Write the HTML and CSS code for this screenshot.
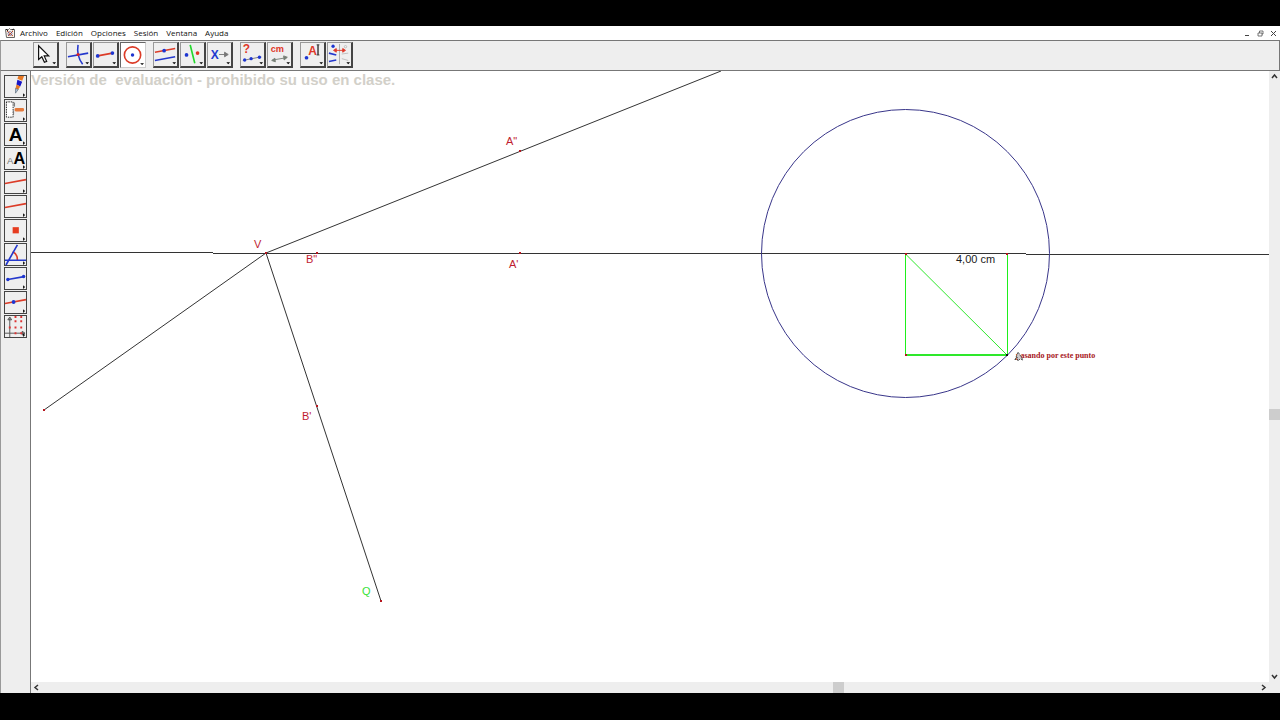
FILE: index.html
```html
<!DOCTYPE html>
<html lang="es">
<head>
<meta charset="utf-8">
<title>Geometría</title>
<link rel="stylesheet" href="styles.css">
</head>
<body>
<div class="app">
  <header class="menubar">
    <svg class="app-icon" width="10" height="10" viewBox="0 0 10 10"><path d="M.5 1.500h3l1-1 1 1h4v8h-8z" fill="#fff4e8" stroke="#666"/><path d="M2 3l6 5M8 3L3 8" stroke="#c3502c"/><circle cx="5" cy="5.500" r="2" fill="none" stroke="#3c4590" stroke-width=".6"/><path d="M1 1l2 2M7 2l2-1" stroke="#222"/></svg>
    <nav class="menus">
      <button class="menu">Archivo</button>
      <button class="menu">Edición</button>
      <button class="menu">Opciones</button>
      <button class="menu">Sesión</button>
      <button class="menu">Ventana</button>
      <button class="menu">Ayuda</button>
    </nav>
    <div class="window-buttons">
      <button class="win" aria-label="Minimizar"><svg width="9" height="9" viewBox="0 0 9 9"><path d="M2 6.500h4" stroke="#444"/></svg></button>
      <button class="win" aria-label="Restaurar"><svg width="9" height="9" viewBox="0 0 9 9"><path d="M2 4h4v3H2zM3.500 4V2H7v3H6" fill="none" stroke="#555" stroke-width=".8"/></svg></button>
      <button class="win" aria-label="Cerrar"><svg width="9" height="9" viewBox="0 0 9 9"><path d="M2 2l5 5M7 2L2 7" stroke="#444"/></svg></button>
    </div>
  </header>

  <div class="toolbar">
    <div class="group">
      <button class="tool" aria-label="Puntero"><svg viewBox="0 0 25 25"><path d="M5 3v15l3.500-3 2.800 6 2.500-1-2.700-6H16z" fill="#fff" stroke="#111" stroke-width="1.300"/><path class="more" d="M20 21h4l-2 2z"/></svg></button>
    </div>
    <div class="group">
      <button class="tool" aria-label="Puntos"><svg viewBox="0 0 25 25"><path d="M1 15l22-4M12 2Q10 14 17 23" class="blue"/><circle cx="12" cy="12.500" r="1.700" fill="#d22"/><path class="more" d="M20 21h4l-2 2z"/></svg></button>
      <button class="tool" aria-label="Rectas"><svg viewBox="0 0 25 25"><path d="M4 14l16-3" class="red"/><circle cx="4" cy="14" r="2" class="dot"/><circle cx="20" cy="11" r="2" class="dot"/><path class="more" d="M20 21h4l-2 2z"/></svg></button>
      <button class="tool active" aria-label="Curvas"><svg viewBox="0 0 25 25"><circle cx="12" cy="12.500" r="8.500" class="red"/><circle cx="12" cy="12.500" r="1.800" class="dot"/><path class="more" d="M20 21h4l-2 2z"/></svg></button>
    </div>
    <div class="group">
      <button class="tool" aria-label="Construir"><svg viewBox="0 0 25 25"><path d="M1 10l22-4" class="red"/><path d="M1 19l22-4" class="blue"/><circle cx="11" cy="8.300" r="2" class="dot"/><path class="more" d="M20 21h4l-2 2z"/></svg></button>
      <button class="tool" aria-label="Transformar"><svg viewBox="0 0 25 25"><path d="M10 2l5 20" stroke="#22d82b" stroke-width="1.800"/><circle cx="6" cy="13" r="2" class="dot"/><circle cx="18" cy="11" r="2" fill="#e03420"/><path class="more" d="M20 21h4l-2 2z"/></svg></button>
      <button class="tool" aria-label="Macros"><svg viewBox="0 0 25 25"><text x="3" y="17" class="glyph" fill="#223bd0">X</text><path d="M12 12.500h6M18 10l4 2.500-4 2.500z" fill="#777" stroke="#777"/><path class="more" d="M20 21h4l-2 2z"/></svg></button>
    </div>
    <div class="group">
      <button class="tool" aria-label="Propiedades"><svg viewBox="0 0 25 25"><text x="2" y="11" class="glyph" fill="#df3828">?</text><path d="M2 19l20-4" stroke="#777"/><circle cx="4" cy="18.500" r="1.800" class="dot"/><circle cx="11" cy="17" r="1.800" class="dot"/><circle cx="20" cy="15.500" r="1.800" class="dot"/><path class="more" d="M20 21h4l-2 2z"/></svg></button>
      <button class="tool" aria-label="Medir"><svg viewBox="0 0 25 25"><text x="3" y="10" class="glyph small" fill="#df3828">cm</text><path d="M5 18.500l15-2.500M7.500 16.500L4 19l4 1.500zM17 14l4 1.500-3.500 3z" fill="#778077" stroke="#778077"/><path class="more" d="M20 21h4l-2 2z"/></svg></button>
    </div>
    <div class="group">
      <button class="tool" aria-label="Ver"><svg viewBox="0 0 25 25"><text x="8" y="13" class="glyph" fill="#df3828">A</text><path d="M17 2h1.500v11H17M20 2h-1.500v11H20" fill="none" stroke="#333"/><circle cx="6" cy="16" r="2" class="dot"/><path class="more" d="M20 21h4l-2 2z"/></svg></button>
      <button class="tool" aria-label="Atributos"><svg viewBox="0 0 25 25"><path d="M12.500 1v22" stroke="#aaa"/><path d="M1 11l8 2M1 20l8-1.500" class="blue"/><path d="M15 12l7-1M15 17l7 2" stroke="#bbb"/><circle cx="5.500" cy="3.500" r="1.800" class="dot"/><circle cx="19" cy="4" r="1.300" fill="none" stroke="#bbb"/><path d="M8 8h9M9 6L6 8l3 2zM16 6l3 2-3 2z" fill="#df3828" stroke="#df3828"/><path class="more" d="M20 21h4l-2 2z"/></svg></button>
    </div>
  </div>

  <main class="workspace">
    <aside class="attributes">
      <button class="attr" aria-label="Color"><svg viewBox="0 0 22 22"><path d="M14 0h6l-2 5-5-2z" fill="#e87924"/><path d="M13 4l5 2-2 5-4-2z" fill="#1815c8"/><path d="M12 9l4 2-2 3-3-1z" fill="#e87924"/><path d="M11 13l3 1-3 4z" fill="#aabbd0" stroke="#345" stroke-width=".5"/><path class="more" d="M19 18v4l2-2z"/></svg></button>
      <button class="attr" aria-label="Rellenar"><svg viewBox="0 0 22 22"><path d="M1.500 2v16h7V2z" fill="#fff" stroke="#222" stroke-dasharray="1.500 1"/><path d="M8 3h2v4M9 11v4" stroke="#777" fill="none"/><rect x="10" y="8.500" width="10" height="3.500" rx="1.500" fill="#e57a3c"/><path class="more" d="M19 18v4l2-2z"/></svg></button>
      <button class="attr" aria-label="Color del texto"><svg viewBox="0 0 22 22"><text x="4" y="18" class="glyph big">A</text><path class="more" d="M19 18v4l2-2z"/></svg></button>
      <button class="attr" aria-label="Tamaño del texto"><svg viewBox="0 0 22 22"><text x="2" y="17" class="glyph thin" fill="#777">A</text><text x="9" y="17" class="glyph medium">A</text><path class="more" d="M19 18v4l2-2z"/></svg></button>
      <button class="attr" aria-label="Espesor"><svg viewBox="0 0 22 22"><path d="M0 12l22-4" class="red"/><path class="more" d="M19 18v4l2-2z"/></svg></button>
      <button class="attr" aria-label="Punteado"><svg viewBox="0 0 22 22"><path d="M0 12l22-4" class="red"/><path class="more" d="M19 18v4l2-2z"/></svg></button>
      <button class="attr" aria-label="Aspecto del punto"><svg viewBox="0 0 22 22"><path d="M8 7.500h6.500V14H8z" fill="#e63c20"/><path class="more" d="M19 18v4l2-2z"/></svg></button>
      <button class="attr" aria-label="Marca de ángulo"><svg viewBox="0 0 22 22"><path d="M8 8q5 2 5 9" class="red"/><path d="M1 22L13 1M0 17h22" class="blue"/><path class="more" d="M19 18v4l2-2z"/></svg></button>
      <button class="attr" aria-label="Marca de segmento"><svg viewBox="0 0 22 22"><path d="M3 12l17-3" class="blue"/><circle cx="3" cy="12" r="1.800" class="dot"/><circle cx="19.500" cy="9" r="1.800" class="dot"/><path class="more" d="M19 18v4l2-2z"/></svg></button>
      <button class="attr" aria-label="Punto sobre recta"><svg viewBox="0 0 22 22"><path d="M0 12l22-4" class="red"/><circle cx="9" cy="10.500" r="2" class="dot"/><path class="more" d="M19 18v4l2-2z"/></svg></button>
      <button class="attr" aria-label="Ejes"><svg viewBox="0 0 22 22"><path d="M5 22V3M0 18h19M3 4l2-3 2 3zM18 16l3 2-3 2z" fill="#999" stroke="#555"/><path d="M10 5.500h2M16 5.500h2M10 12h2M16 12h2M4 12h2M10 18h2M16 18h2M10 1h2M16 1h2" stroke="#d33" stroke-width="2"/><path class="more" d="M19 18v4l2-2z"/></svg></button>
    </aside>

    <section class="sheet">
      <div class="drawing">
        <h1 class="notice">Versión de &nbsp;evaluación - prohibido su uso en clase.</h1>
        <svg class="figure" aria-label="Construcción geométrica">
          <g transform="translate(-31 -71)">
            <g class="ink">
              <path d="M31 252.500H213M213 253.500H1026M1026 254.500H1300" class="crisp"/>
              <path d="M266 253L721 71M266 253L44 410M266 253L381 601"/>
            </g>
            <circle cx="905.500" cy="253.500" r="144" class="circle"/>
            <path d="M905.500 254L1007 355" class="square"/>
            <path d="M905.500 254V355M1007.500 254V355" class="square crisp side"/>
            <path d="M905 355H1007" class="square base"/>
            <g class="points">
              <rect x="265" y="252" width="2" height="2"/><rect x="316" y="252" width="2" height="2"/>
              <rect x="519" y="252" width="2" height="2"/><rect x="519" y="150" width="2" height="2"/>
              <rect x="43" y="409" width="2" height="2"/><rect x="316" y="405" width="2" height="2"/>
              <rect x="380" y="600" width="2" height="2"/><rect x="905" y="253" width="2" height="2"/>
              <rect x="1006" y="253" width="2" height="2"/><rect x="905" y="354" width="2" height="2"/>
            </g>
            <rect x="1006" y="354" width="2" height="2" fill="#111"/>
            <g class="labels">
              <text x="254" y="248">V</text>
              <text x="306" y="263">B"</text>
              <text x="509" y="268">A'</text>
              <text x="506" y="145">A"</text>
              <text x="302" y="420">B'</text>
              <text x="362" y="595" class="q">Q</text>
            </g>
            <text x="956" y="263" class="measure">4,00 cm</text>
            <text x="1016" y="358" class="hint">pasando por este punto</text>
            <path d="M1015 360l3-8 2 3 3 5-3-1-2 2-1-4z" fill="#ccc" stroke="#333" stroke-width=".8" stroke-dasharray="2 1"/>
          </g>
        </svg>
      </div>
      <div class="scroll vertical">
        <button class="arrow" aria-label="Subir"><svg width="11" height="11" viewBox="0 0 11 11"><path d="M3 7l2.500-3L8 7"/></svg></button>
        <div class="track"><span class="before"></span><span class="thumb"></span><span class="after"></span></div>
        <button class="arrow" aria-label="Bajar"><svg width="11" height="11" viewBox="0 0 11 11"><path d="M3 4l2.500 3L8 4"/></svg></button>
      </div>
      <div class="scroll horizontal">
        <button class="arrow" aria-label="Izquierda"><svg width="11" height="11" viewBox="0 0 11 11"><path d="M7 3L4 5.500 7 8"/></svg></button>
        <div class="track"><span class="before"></span><span class="thumb"></span><span class="after"></span></div>
        <button class="arrow" aria-label="Derecha"><svg width="11" height="11" viewBox="0 0 11 11"><path d="M4 3l3 2.500L4 8"/></svg></button>
      </div>
      <div class="corner"></div>
    </section>
  </main>
</div>
</body>
</html>
```
FILE: styles.css
```css
* { box-sizing: border-box; }

body {
  margin: 0;
  background: #000;
  font-family: "Open Sans", "Noto Sans", sans-serif;
}

button {
  margin: 0;
  padding: 0;
  border: 0;
  background: none;
  font: inherit;
  color: inherit;
}

svg { display: block; }

.app {
  display: flex;
  flex-direction: column;
  height: 100vh;
  padding: 26px 0 27px;
}

.menubar {
  display: flex;
  align-items: center;
  height: 14px;
  padding-left: 5px;
  background: #fff;
  font-size: 8px;
  line-height: 14px;
  color: #111;
}

.menus {
  display: flex;
  gap: 8px;
  margin-left: 5px;
}

.window-buttons {
  display: flex;
  gap: 4px;
  margin-left: auto;
  padding-right: 2px;
}

.toolbar {
  display: flex;
  gap: 7px;
  height: 31px;
  padding: 1px 0 0 32px;
  background: #eee;
  border: 1px solid #777;
  border-left-color: #999;
}

.group {
  display: flex;
  gap: 1px;
}

.tool {
  width: 26px;
  height: 26px;
  background: #efefef;
  border: 1px solid #999;
  border-right: 2px solid #444;
  border-bottom: 2px solid #444;
}

.tool.active {
  background: #fff;
  border: 1px solid #666;
  border-right-color: #ccc;
  border-bottom-color: #ccc;
}

.tool svg,
.attr svg {
  width: 100%;
  height: 100%;
}

.blue { fill: none; stroke: #2438cc; stroke-width: 1.7; }
.red { fill: none; stroke: #dc3c28; stroke-width: 1.7; }
.dot { fill: #1d35d0; }
.more { fill: #000; }

.glyph {
  font: bold 13px "Liberation Sans", Arial, sans-serif;
}

.glyph.small { font-size: 10px; }
.glyph.medium { font-size: 17px; }
.glyph.big { font-size: 20px; }
.glyph.thin { font-size: 10px; font-weight: normal; }

.workspace {
  display: flex;
  flex: 1;
  min-height: 0;
}

.attributes {
  display: flex;
  flex-direction: column;
  gap: 1px;
  width: 31px;
  padding: 4px 0 0 3px;
  background: #eee;
  border: 1px solid #777;
  border-width: 0 1px;
  border-left-color: #999;
}

.attr {
  width: 23px;
  height: 23px;
  background: #efefef;
  border: 1px solid #444;
}

.attr svg { overflow: visible; }

.sheet {
  display: grid;
  flex: 1;
  grid-template-columns: 1fr 11px;
  grid-template-rows: 1fr 11px;
  min-width: 0;
}

.drawing {
  position: relative;
  overflow: hidden;
  background: #fff;
}

.notice {
  margin: 0;
  font: bold 15px/18px "Liberation Sans", Arial, sans-serif;
  color: #d2d0c9;
  white-space: nowrap;
}

.figure {
  position: absolute;
  inset: 0;
  width: 100%;
  height: 100%;
}

.ink { fill: none; stroke: #333; stroke-width: 1; }
.crisp { shape-rendering: crispEdges; }
.circle { fill: none; stroke: #39368a; stroke-width: 1; }
.square { fill: none; stroke: #2ee82b; stroke-width: 1; }
.side { stroke: #1fef1c; }
.base { stroke-width: 2; }
.points { fill: #b5161e; }

.labels {
  font: 11px "Liberation Sans", Arial, sans-serif;
  fill: #c01c30;
}

.labels .q { fill: #38e238; }
.measure { font: 11px "Liberation Sans", Arial, sans-serif; fill: #222; }
.hint { font: bold 8px "Liberation Serif", "Times New Roman", serif; fill: #a7181c; }

.scroll {
  display: flex;
  background: #eee;
}

.vertical,
.vertical .track { flex-direction: column; }
.horizontal { grid-row: 2; }
.corner { grid-row: 2; background: #eee; }

.track {
  display: flex;
  flex: 1;
}

.before,
.after { flex: 1; }

.vertical .before { flex-grow: 326; }
.vertical .after { flex-grow: 251; }
.horizontal .before { flex-grow: 791; }
.horizontal .after { flex-grow: 414; }

.thumb {
  flex: none;
  width: 11px;
  height: 11px;
  background: #cdcdcd;
}

.arrow path {
  fill: none;
  stroke: #333;
  stroke-width: 1.5;
}
```
